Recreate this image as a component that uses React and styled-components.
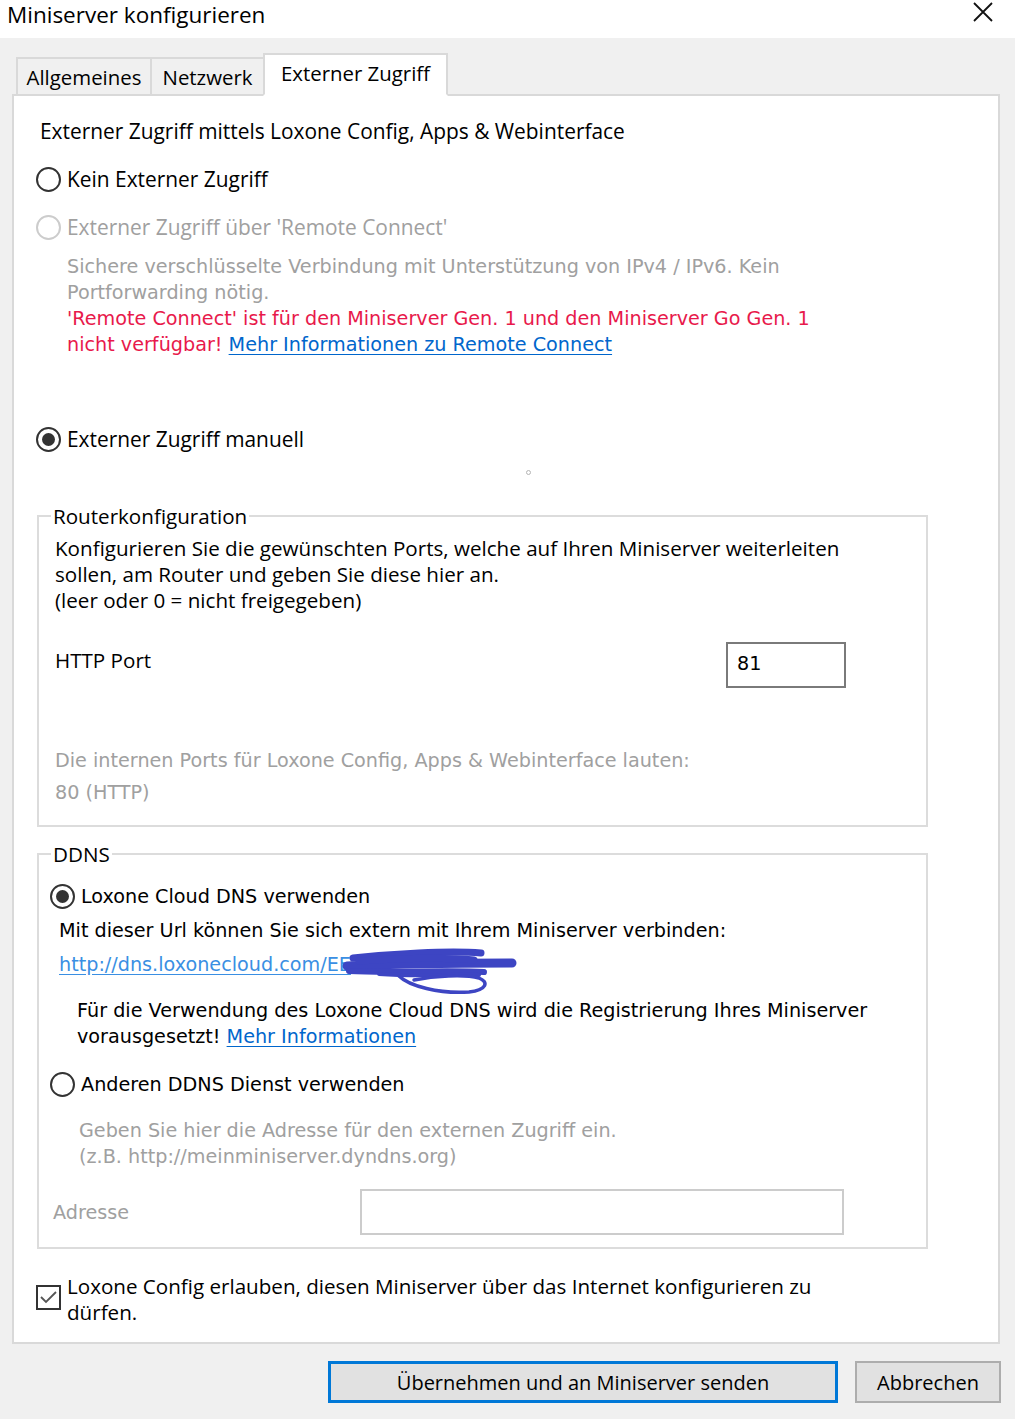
import React from 'react';
import styled, { createGlobalStyle } from 'styled-components';

const UI = '"Open Sans", "Noto Sans", sans-serif';
const PX = '"DejaVu Sans", "Liberation Sans", sans-serif';

const Global = createGlobalStyle`
  html, body { margin: 0; padding: 0; background: #f0f0f0; }
  body { width: 1015px; height: 1419px; overflow: hidden; font-family: ${UI}; color: #000; }
  * { box-sizing: border-box; }
`;

const Window = styled.div`
  width: 1015px;
  height: 1419px;
  background: #f0f0f0;
  display: flex;
  flex-direction: column;
`;

const TitleBar = styled.div`
  height: 38px;
  background: #fff;
  display: flex;
  align-items: flex-start;
  justify-content: space-between;
  padding: 0 21px 0 7px;
`;

const Title = styled.div`
  font-size: 22.5px;
  line-height: 30px;
`;

const CloseBtn = styled.div`
  width: 22px;
  height: 22px;
  margin-top: 1px;
  display: flex;
`;

const TabRow = styled.div`
  display: flex;
  align-items: flex-end;
  margin-top: 15px;
  padding-left: 16px;
  height: 43px;
  margin-bottom: -2px;
  position: relative;
  z-index: 1;
`;

const Tab = styled.div`
  width: ${p => p.$w}px;
  height: ${p => (p.$active ? 43 : 39)}px;
  margin-left: ${p => (p.$first ? 0 : -2)}px;
  background: ${p => (p.$active ? '#fff' : '#f0f0f0')};
  border: 2px solid #d9d9d9;
  border-bottom: ${p => (p.$active ? '2px solid #fff' : '2px solid #d9d9d9')};
  display: flex;
  align-items: center;
  justify-content: center;
  font-size: 20.4px;
  padding-bottom: ${p => (p.$active ? 4 : 0)}px;
  position: relative;
  z-index: ${p => (p.$active ? 2 : 1)};
`;

const Panel = styled.div`
  margin: 0 15px 0 12px;
  height: 1250px;
  background: #fff;
  border: 2px solid #d9d9d9;
  padding: 0 0 0 22px;
  display: flex;
  flex-direction: column;
  align-items: flex-start;
`;

const Heading = styled.div`
  font-size: 20.9px;
  line-height: 26px;
  margin: 22px 0 0 4px;
`;

const RadioRow = styled.div`
  display: flex;
  align-items: center;
  gap: 6px;
  height: 26px;
  margin-top: ${p => p.$mt || 0}px;
  font-family: ${p => (p.$px ? PX : UI)};
  font-size: ${p => (p.$px ? 19.2 : 20.9)}px;
  color: ${p => (p.$disabled ? '#a0a0a0' : '#000')};
  white-space: nowrap;
`;

const RadioCircle = styled.span`
  width: 25px;
  height: 25px;
  border-radius: 50%;
  border: 2px solid ${p => (p.$disabled ? '#cccccc' : '#333333')};
  display: flex;
  align-items: center;
  justify-content: center;
  flex: none;
  background: #fff;
  &::after {
    content: '';
    width: 13px;
    height: 13px;
    border-radius: 50%;
    background: #333;
    display: ${p => (p.$checked ? 'block' : 'none')};
  }
`;

const TextBlock = styled.div`
  font-family: ${p => (p.$ui ? UI : PX)};
  font-size: ${p => (p.$ui ? 20.6 : 19.2)}px;
  line-height: ${p => p.$lh || 26}px;
  margin-top: ${p => p.$mt || 0}px;
  margin-left: ${p => p.$ml || 0}px;
  color: ${p => p.$color || '#000'};
  white-space: nowrap;
`;

const Red = styled.span`
  color: #e8194b;
`;

const Link = styled.a`
  color: ${p => (p.$light ? '#3a8fe3' : '#0066cc')};
  text-decoration: underline;
  text-underline-offset: 3px;
  cursor: pointer;
`;

const DotSpacer = styled.div`
  height: 51px;
  padding: 18px 0 0 490px;
`;

const FocusDot = styled.div`
  width: 5px;
  height: 5px;
  border-radius: 50%;
  border: 1px solid #b5b5b5;
`;

const GroupBox = styled.fieldset`
  margin: ${p => p.$mt || 0}px 0 0 1px;
  width: 891px;
  border: 2px solid #dcdcdc;
  padding: 0;
  min-width: 0;
`;

const Legend = styled.legend`
  margin-left: 12px;
  padding: 0 2px;
  font-size: 20.6px;
  line-height: 26px;
`;

const GroupInner = styled.div`
  padding: ${p => p.$pt}px 0 ${p => p.$pb}px ${p => p.$pl}px;
  display: flex;
  flex-direction: column;
  align-items: flex-start;
`;

const FieldRow = styled.div`
  display: grid;
  grid-template-columns: ${p => p.$label}px ${p => p.$input}px;
  margin-top: ${p => p.$mt}px;
  margin-left: ${p => p.$ml || 0}px;
`;

const FieldLabel = styled.div`
  font-family: ${p => (p.$px ? PX : UI)};
  font-size: ${p => (p.$px ? 19.2 : 20.6)}px;
  line-height: 26px;
  margin-top: ${p => p.$mt}px;
  color: ${p => (p.$disabled ? '#a0a0a0' : '#000')};
`;

const Input = styled.div`
  height: 46px;
  border: 2px solid ${p => (p.$disabled ? '#cccccc' : '#7a7a7a')};
  background: #fff;
  font-family: ${PX};
  font-size: 19.2px;
  line-height: 40px;
  padding-left: 9px;
`;

const LinkRow = styled.div`
  position: relative;
  margin-top: 8px;
  margin-left: 9px;
  font-family: ${PX};
  font-size: 19.2px;
  line-height: 26px;
`;

const Scribble = styled.svg`
  position: absolute;
  left: 280px;
  top: -8px;
  width: 180px;
  height: 56px;
  overflow: visible;
`;

const CheckRow = styled.div`
  display: flex;
  align-items: flex-start;
  gap: 6px;
  margin-top: 24px;
`;

const CheckBox = styled.span`
  width: 25px;
  height: 25px;
  border: 2px solid #333;
  margin-top: 12px;
  flex: none;
  display: flex;
  align-items: center;
  justify-content: center;
  background: #fff;
`;

const CheckText = styled.div`
  font-size: 20.6px;
  line-height: 26px;
  white-space: nowrap;
`;

const Footer = styled.div`
  display: flex;
  justify-content: flex-end;
  gap: 17px;
  margin-top: 17px;
  padding-right: 14px;
`;

const Button = styled.button`
  width: ${p => p.$w}px;
  height: 42px;
  background: #e1e1e1;
  border: ${p => (p.$primary ? '3px solid #0078d7' : '2px solid #adadad')};
  font-family: ${UI};
  font-size: 20px;
  color: #000;
  padding: 0;
  display: flex;
  align-items: center;
  justify-content: center;
`;

function Radio({ checked, disabled, children, mt, px }) {
  return (
    <RadioRow $mt={mt} $disabled={disabled} $px={px}>
      <RadioCircle $checked={checked} $disabled={disabled} />
      <span>{children}</span>
    </RadioRow>
  );
}

export default function App() {
  return (
    <Window>
      <Global />
      <TitleBar>
        <Title>Miniserver konfigurieren</Title>
        <CloseBtn>
          <svg width="22" height="22" viewBox="0 0 22 22">
            <path d="M2 2 L20 20 M20 2 L2 20" stroke="#111" strokeWidth="1.8" fill="none" />
          </svg>
        </CloseBtn>
      </TitleBar>

      <TabRow>
        <Tab $w={136} $first>Allgemeines</Tab>
        <Tab $w={115}>Netzwerk</Tab>
        <Tab $w={185} $active>Externer Zugriff</Tab>
      </TabRow>

      <Panel>
        <Heading>Externer Zugriff mittels Loxone Config, Apps &amp; Webinterface</Heading>
        <Radio mt={22}>Kein Externer Zugriff</Radio>
        <Radio mt={22} disabled>Externer Zugriff über 'Remote Connect'</Radio>
        <TextBlock $mt={14} $ml={31} $color="#a0a0a0">
          Sichere verschlüsselte Verbindung mit Unterstützung von IPv4 / IPv6. Kein
          <br />
          Portforwarding nötig.
          <br />
          <Red>'Remote Connect' ist für den Miniserver Gen. 1 und den Miniserver Go Gen. 1</Red>
          <br />
          <Red>nicht verfügbar!</Red> <Link>Mehr Informationen zu Remote Connect</Link>
        </TextBlock>
        <Radio mt={68} checked>Externer Zugriff manuell</Radio>
        <DotSpacer>
          <FocusDot />
        </DotSpacer>

        <GroupBox>
          <Legend>Routerkonfiguration</Legend>
          <GroupInner $pt={6} $pb={16} $pl={16}>
            <TextBlock $ui>
              Konfigurieren Sie die gewünschten Ports, welche auf Ihren Miniserver weiterleiten
              <br />
              sollen, am Router und geben Sie diese hier an.
              <br />
              (leer oder 0 = nicht freigegeben)
            </TextBlock>
            <FieldRow $label={671} $input={120} $mt={29}>
              <FieldLabel $mt={5}>HTTP Port</FieldLabel>
              <Input>81</Input>
            </FieldRow>
            <TextBlock $mt={57} $lh={32} $color="#a0a0a0">
              Die internen Ports für Loxone Config, Apps &amp; Webinterface lauten:
              <br />
              80 (HTTP)
            </TextBlock>
          </GroupInner>
        </GroupBox>

        <GroupBox $mt={14}>
          <Legend>DDNS</Legend>
          <GroupInner $pt={16} $pb={12} $pl={11}>
            <Radio checked px>Loxone Cloud DNS verwenden</Radio>
            <TextBlock $mt={9} $ml={9}>
              Mit dieser Url können Sie sich extern mit Ihrem Miniserver verbinden:
            </TextBlock>
            <LinkRow>
              <Link $light>http://dns.loxonecloud.com/EE</Link>
              <Scribble viewBox="0 0 180 56">
                <g stroke="#3d45c3" fill="none" strokeLinecap="round" strokeLinejoin="round">
                  <path d="M8 22 C 50 20, 120 19, 173 19" strokeWidth="9" />
                  <path d="M14 14 C 50 10, 110 6, 142 9" strokeWidth="7" />
                  <path d="M20 17 C 60 14, 110 13, 135 16" strokeWidth="7" />
                  <path d="M10 27 C 50 29, 110 26, 145 28" strokeWidth="6" />
                  <path d="M40 30 C 80 33, 120 30, 140 31" strokeWidth="4" />
                  <path d="M60 32 C 70 42, 100 50, 130 48 C 148 46, 150 38, 140 34 C 125 30, 95 32, 75 36" strokeWidth="3.5" />
                </g>
              </Scribble>
            </LinkRow>
            <TextBlock $mt={20} $ml={27}>
              Für die Verwendung des Loxone Cloud DNS wird die Registrierung Ihres Miniserver
              <br />
              vorausgesetzt! <Link>Mehr Informationen</Link>
            </TextBlock>
            <Radio mt={21} px>Anderen DDNS Dienst verwenden</Radio>
            <TextBlock $mt={21} $ml={29} $color="#a0a0a0">
              Geben Sie hier die Adresse für den externen Zugriff ein.
              <br />
              (z.B. http://meinminiserver.dyndns.org)
            </TextBlock>
            <FieldRow $label={307} $input={484} $mt={19} $ml={3}>
              <FieldLabel $mt={11} $px $disabled>Adresse</FieldLabel>
              <Input $disabled />
            </FieldRow>
          </GroupInner>
        </GroupBox>

        <CheckRow>
          <CheckBox>
            <svg width="19" height="19" viewBox="0 0 19 19">
              <path d="M2 9 L7 14 L17 4" stroke="#555" strokeWidth="1.8" fill="none" />
            </svg>
          </CheckBox>
          <CheckText>
            Loxone Config erlauben, diesen Miniserver über das Internet konfigurieren zu
            <br />
            dürfen.
          </CheckText>
        </CheckRow>
      </Panel>

      <Footer>
        <Button $primary $w={510}>Übernehmen und an Miniserver senden</Button>
        <Button $w={146}>Abbrechen</Button>
      </Footer>
    </Window>
  );
}
